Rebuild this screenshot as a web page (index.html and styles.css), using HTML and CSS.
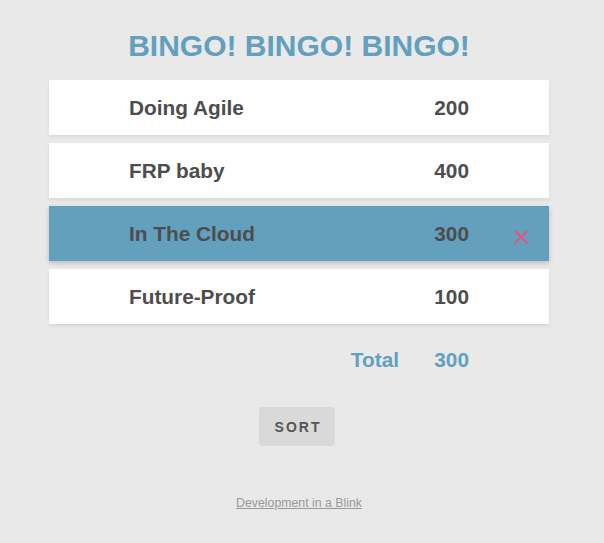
FILE: index.html
```html
<!DOCTYPE html>
<html>
<head>
<meta charset="utf-8">
<link rel="stylesheet" href="styles.css">
</head>
<body>
<main class="app">
  <h1 class="title">BINGO! BINGO! BINGO!</h1>
  <ul class="list">
    <li class="row"><span class="name">Doing Agile</span><span class="score">200</span><span class="del"></span></li>
    <li class="row"><span class="name">FRP baby</span><span class="score">400</span><span class="del"></span></li>
    <li class="row selected"><span class="name">In The Cloud</span><span class="score">300</span><span class="del"><svg width="16" height="16" viewBox="0 0 16 16"><path d="M1.5 1.5 L14.5 14.5 M14.5 1.5 L1.5 14.5" stroke="#e2557f" stroke-width="2" fill="none"/></svg></span></li>
    <li class="row"><span class="name">Future-Proof</span><span class="score">100</span><span class="del"></span></li>
  </ul>
  <div class="row total"><span class="name">Total</span><span class="score">300</span><span class="del"></span></div>
  <button class="sort">SORT</button>
  <a class="footer" href="#">Development in a Blink</a>
</main>
</body>
</html>
```
FILE: styles.css
```css
html, body {
  margin: 0;
  padding: 0;
  background: #e9e9e9;
}
body {
  font-family: "Liberation Sans", Arial, sans-serif;
  padding-right: 6px;
}
.app {
  width: 500px;
  margin: 0 auto;
  padding-top: 29px;
  display: flex;
  flex-direction: column;
  align-items: center;
}
.title {
  margin: 0 0 17px;
  font-size: 30px;
  line-height: 34px;
  font-weight: bold;
  color: #62a0bd;
  text-align: center;
}
.list {
  list-style: none;
  margin: 0;
  padding: 0;
  width: 100%;
  display: flex;
  flex-direction: column;
  gap: 8px;
}
.row {
  display: grid;
  grid-template-columns: 1fr 70px 80px;
  align-items: center;
  height: 55px;
  padding-left: 80px;
  box-sizing: border-box;
  background: #fff;
  box-shadow: 0 2px 3px rgba(0,0,0,0.08);
  font-size: 20.8px;
  font-weight: bold;
  color: #4d4d4d;
  width: 100%;
}
.row.selected {
  background: #62a0bd;
  box-shadow: 0 2px 5px rgba(0,0,0,0.2);
}
.score {
  text-align: right;
}
.del {
  display: flex;
  align-items: center;
  padding-left: 44px;
  padding-top: 6px;
}
.row.total {
  margin-top: 8px;
  background: transparent;
  box-shadow: none;
  color: #62a0bd;
}
.total .name {
  text-align: right;
}
.sort {
  margin-top: 20px;
  margin-right: 4px;
  height: 39px;
  padding: 0 14px 0 16px;
  border: none;
  border-radius: 3px;
  background: #d9d9d9;
  font-family: "Liberation Sans", Arial, sans-serif;
  font-size: 14px;
  font-weight: bold;
  letter-spacing: 2px;
  color: #555;
}
.footer {
  margin-top: 50px;
  font-size: 12.3px;
  line-height: 14px;
  color: #999;
}
```
